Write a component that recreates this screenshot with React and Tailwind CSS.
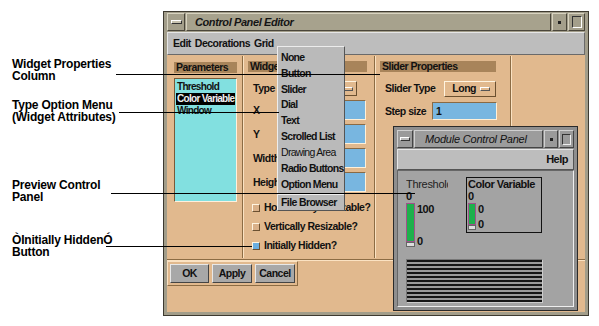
import React from "react";

const UI = "font-['Liberation_Sans',Arial,sans-serif] font-bold text-[10.5px] tracking-[-0.5px] leading-none text-[#111] whitespace-nowrap";
const ANN = "font-['Liberation_Sans',Arial,sans-serif] font-bold text-[12px] leading-[12px] tracking-[-0.2px] text-black whitespace-nowrap";

function Field({ label, w = "w-[66px]" }) {
  return (
    <div className="flex items-center h-[20px]">
      <span className={`${UI} pl-[9px]`}>{label}</span>
      <div className={`ml-auto mr-[8px] h-[20px] ${w} bg-[#78b6e0] border-t border-l border-[#8a6a44] border-b border-r border-b-[#fff0d8] border-r-[#fff0d8]`} />
    </div>
  );
}

function Check({ label, on }) {
  return (
    <div className="flex items-center h-[19px] pl-[8px] gap-[4px]">
      <span className={`shrink-0 w-[8px] h-[8px] border-t border-l border-t-[#fff4e0] border-l-[#fff4e0] border-b border-r border-b-[#6b5030] border-r-[#6b5030] ${on ? "bg-[#6aaee0]" : "bg-[#d9b088]"}`} />
      <span className={`${UI}`}>{label}</span>
    </div>
  );
}

function OptGlyph() {
  return <span className="inline-block shrink-0 w-[10px] h-[4px] border-t border-l border-t-[#fff] border-l-[#fff] border-b border-r border-b-[#555] border-r-[#555]" />;
}

function Sep() {
  return <div className="shrink-0 w-[2px] self-stretch border-l border-l-[#8c6c44] border-r border-r-[#fbe2c2] my-[1px]" />;
}

export default function App() {
  const items = ["None", "Button", "Slider", "Dial", "Text", "Scrolled List", "Drawing Area", "Radio Buttons", "Option Menu"];
  return (
    <div className="relative w-[599px] h-[326px] bg-white overflow-hidden">
      <div className="flex">
        {/* annotation column */}
        <div className="w-[163px] shrink-0 flex flex-col pl-[12px]">
          <div className={`${ANN} mt-[58px]`}>Widget Properties<br />Column</div>
          <div className={`${ANN} mt-[17px]`}>Type Option Menu<br />(Widget Attributes)</div>
          <div className={`${ANN} mt-[56px]`}>Preview Control<br />Panel</div>
          <div className={`${ANN} mt-[31px]`}>ÒInitially HiddenÓ<br />Button</div>
        </div>

        {/* main window */}
        <div className="mt-[11px] w-[426px] h-[305px] shrink-0 bg-[#a29d8a] border border-[#3e3a30] pt-[1px] px-[3px] pb-[3px] flex flex-col">
          {/* title bar */}
          <div className="h-[18px] flex items-stretch gap-[1px]">
            <div className="w-[18px] bg-[#a49f8b] border border-t-[#d8d3c0] border-l-[#d8d3c0] border-b-[#4a463a] border-r-[#4a463a] flex items-center justify-center">
              <span className="w-[11px] h-[4px] border border-t-[#fff] border-l-[#fff] border-b-[#333] border-r-[#333] bg-[#c8c3b0]" />
            </div>
            <div className="flex-1 bg-[#a7a28d] border border-t-[#d8d3c0] border-l-[#d8d3c0] border-b-[#4a463a] border-r-[#4a463a] flex items-center pl-[8px]">
              <span className="font-['Liberation_Sans',Arial,sans-serif] font-bold italic text-[11px] tracking-[-0.4px] text-[#151515] whitespace-nowrap">Control Panel Editor</span>
            </div>
            <div className="w-[15px] bg-[#a49f8b] border border-t-[#d8d3c0] border-l-[#d8d3c0] border-b-[#4a463a] border-r-[#4a463a] flex items-center justify-center">
              <span className="w-[3px] h-[3px] bg-[#222]" />
            </div>
            <div className="w-[17px] bg-[#a49f8b] border border-t-[#d8d3c0] border-l-[#d8d3c0] border-b-[#4a463a] border-r-[#4a463a] flex items-center justify-center">
              <span className="w-[10px] h-[12px] border border-t-[#333] border-l-[#333] border-b-[#fff] border-r-[#fff]" />
            </div>
          </div>
          {/* menu bar */}
          <div className="mt-[1px] h-[23px] bg-[#bdbdbd] border border-t-[#e6e6e6] border-l-[#e6e6e6] border-b-[#6a6a6a] border-r-[#6a6a6a] flex items-center pl-[5px] gap-[4px]">
            <span className={UI}>Edit</span>
            <span className={UI}>Decorations</span>
            <span className={UI}>Grid</span>
          </div>
          {/* content */}
          <div className="flex-1 bg-[#e1b98e] flex flex-col">
            <div className="h-[204px] flex">
              {/* parameters column */}
              <div className="w-[75px] shrink-0 pl-[7px] pt-[7px] flex flex-col">
                <div className="w-[63px] h-[11px] bg-[#a8845a] flex items-center pl-[2px]">
                  <span className={UI}>Parameters</span>
                </div>
                <div className="mt-[5px] w-[63px] h-[124px] bg-[#82e0e0] border-t border-l border-t-[#7a5a38] border-l-[#7a5a38] border-b border-r border-b-[#fff0dc] border-r-[#fff0dc] pl-[1px] pt-[2px] flex flex-col overflow-hidden">
                  <span className={`${UI} text-[10px] tracking-[-0.7px] h-[12px] flex items-center pl-[1px]`}>Threshold</span>
                  <span className={`${UI} text-[10px] tracking-[-0.7px] h-[12px] flex items-center pl-[1px] bg-black text-[#f0f0f0] w-[59px]`}>Color Variable</span>
                  <span className={`${UI} text-[10px] tracking-[-0.7px] h-[12px] flex items-center pl-[1px]`}>Window</span>
                </div>
              </div>
              <Sep />
              {/* widget attributes column */}
              <div className="w-[130px] shrink-0 flex flex-col pt-[6px]">
                <div className="ml-[4px] w-[119px] h-[11px] bg-[#a8845a] flex items-center pl-[2px]">
                  <span className={UI}>Widget Attributes</span>
                </div>
                <div className="mt-[9px] h-[15px] flex items-center">
                  <span className={`${UI} pl-[9px]`}>Type</span>
                  <div className="ml-auto mr-[17px] w-[56px] h-[15px] border border-t-[#fff4e0] border-l-[#fff4e0] border-b-[#6b5030] border-r-[#6b5030] flex items-center justify-end pr-[3px]">
                    <OptGlyph />
                  </div>
                </div>
                <div className="mt-[4px] flex flex-col gap-[4px]">
                  <Field label="X" />
                  <Field label="Y" />
                  <Field label="Width" />
                  <Field label="Height" />
                </div>
                <div className="mt-[6px] flex flex-col">
                  <Check label="Horizontally Resizable?" />
                  <Check label="Vertically Resizable?" />
                  <Check label="Initially Hidden?" on />
                </div>
              </div>
              <Sep />
              {/* slider properties column */}
              <div className="w-[134px] shrink-0 flex flex-col pt-[6px]">
                <div className="ml-[4px] w-[116px] h-[11px] bg-[#a8845a] flex items-center pl-[2px]">
                  <span className={UI}>Slider Properties</span>
                </div>
                <div className="mt-[9px] h-[15px] flex items-center">
                  <span className={`${UI} pl-[9px]`}>Slider Type</span>
                  <div className="ml-[9px] w-[52px] h-[16px] border border-t-[#fff4e0] border-l-[#fff4e0] border-b-[#6b5030] border-r-[#6b5030] flex items-center justify-between pl-[7px] pr-[5px]">
                    <span className={UI}>Long</span>
                    <OptGlyph />
                  </div>
                </div>
                <div className="mt-[6px] h-[18px] flex items-center">
                  <span className={`${UI} pl-[9px]`}>Step size</span>
                  <div className="ml-[6px] w-[65px] h-[18px] bg-[#78b6e0] border-t border-l border-t-[#8a6a44] border-l-[#8a6a44] border-b border-r border-b-[#fff0d8] border-r-[#fff0d8] flex items-center pl-[3px]">
                    <span className={UI}>1</span>
                  </div>
                </div>
              </div>
              <Sep />
              <div className="flex-1" />
            </div>
            {/* horizontal separator */}
            <div className="h-[2px] border-t border-t-[#8c6c44] border-b border-b-[#fbe2c2]" />
            {/* buttons */}
            <div className="flex">
              <div className="flex gap-[3px] p-[2px] border border-t-[#fbe2c2] border-l-[#fbe2c2] border-b-[#8c6c44] border-r-[#8c6c44]">
                {["OK", "Apply", "Cancel"].map((b, i) => (
                  <div key={b} className={`${i === 0 ? "w-[39px]" : "w-[40px]"} h-[19px] bg-[#a8a8a8] border border-t-[#e8e8e8] border-l-[#e8e8e8] border-b-[#444] border-r-[#444] flex items-center justify-center`}>
                    <span className={UI}>{b}</span>
                  </div>
                ))}
              </div>
            </div>
          </div>
        </div>
      </div>

      {/* popup menu */}
      <div className="absolute left-[277px] top-[46px] w-[68px] h-[165px] bg-[#bababa] border border-t-[#ececec] border-l-[#ececec] border-b-[#555] border-r-[#555] flex flex-col pt-[2px] overflow-hidden">
        {items.map((it) => (
          <div key={it} className={`h-[16px] flex items-center pl-[3px] ${UI} tracking-[-0.7px] ${it === "Drawing Area" ? "font-normal text-[#7a7a7a]" : ""}`}>{it}</div>
        ))}
        <div className="mt-[1px] h-[2px] border-t border-t-[#666] border-b border-b-[#eee]" />
        <div className={`h-[15px] flex items-center pl-[3px] ${UI} tracking-[-0.6px]`}>File Browser</div>
      </div>

      {/* module control panel */}
      <div className="absolute left-[393px] top-[126px] w-[185px] h-[185px] bg-[#8e8e8e] border border-[#2a2a2a] p-[3px] flex flex-col">
        <div className="h-[18px] flex items-stretch gap-[1px]">
          <div className="w-[16px] bg-[#9a9a9a] border border-t-[#d0d0d0] border-l-[#d0d0d0] border-b-[#444] border-r-[#444] flex items-center justify-center">
            <span className="w-[10px] h-[4px] border border-t-[#fff] border-l-[#fff] border-b-[#333] border-r-[#333] bg-[#bbb]" />
          </div>
          <div className="flex-1 bg-[#9c9c9c] border border-t-[#d0d0d0] border-l-[#d0d0d0] border-b-[#444] border-r-[#444] flex items-center pl-[10px]">
            <span className="font-['Liberation_Sans',Arial,sans-serif] italic text-[11px] tracking-[-0.2px] text-[#111] whitespace-nowrap">Module Control Panel</span>
          </div>
          <div className="w-[14px] bg-[#9a9a9a] border border-t-[#d0d0d0] border-l-[#d0d0d0] border-b-[#444] border-r-[#444] flex items-center justify-center">
            <span className="w-[3px] h-[3px] bg-[#222]" />
          </div>
          <div className="w-[15px] bg-[#9a9a9a] border border-t-[#d0d0d0] border-l-[#d0d0d0] border-b-[#444] border-r-[#444] flex items-center justify-center">
            <span className="w-[9px] h-[11px] border border-t-[#333] border-l-[#333] border-b-[#eee] border-r-[#eee]" />
          </div>
        </div>
        <div className="mt-[1px] h-[21px] bg-[#bdbdbd] border border-t-[#e6e6e6] border-l-[#e6e6e6] border-b-[#555] border-r-[#555] flex items-center justify-end pr-[5px]">
          <span className={`${UI} text-[11px]`}>Help</span>
        </div>
        <div className="flex-1 bg-[#a3a3a3] border border-t-[#666] border-l-[#666] border-b-[#eee] border-r-[#eee] flex flex-col pl-[8px] pt-[7px]">
          <div className="flex gap-[16px]">
            {/* threshold */}
            <div className="w-[44px] flex flex-col">
              <span className="font-['Liberation_Sans',Arial,sans-serif] text-[11px] leading-[12px] tracking-[-0.3px] text-[#222] whitespace-nowrap overflow-hidden w-[42px]">Threshold</span>
              <span className={`${UI} text-[11px] mt-[1px]`}>0</span>
              <div className="flex mt-[1px]">
                <div className="flex flex-col">
                  <div className="w-[9px] h-[39px] bg-[#1eb04c] border border-[#a0508a]" />
                  <div className="w-[9px] h-[5px] bg-[#ddd] border border-[#666]" />
                </div>
                <div className="flex flex-col justify-between ml-[2px] pt-[1px] h-[44px]">
                  <span className={`${UI} text-[11px]`}>100</span>
                  <span className={`${UI} text-[11px]`}>0</span>
                </div>
              </div>
            </div>
            {/* color variable */}
            <div className="-mt-[1px] w-[76px] h-[56px] border border-[#111] flex flex-col pl-[1px]">
              <span className={`${UI} text-[11px] tracking-[-0.4px] mt-[1px]`}>Color Variable</span>
              <span className={`${UI} text-[11px] mt-[1px]`}>0</span>
              <div className="flex mt-[1px]">
                <div className="flex flex-col">
                  <div className="w-[8px] h-[22px] bg-[#1eb04c] border border-[#a0508a]" />
                  <div className="w-[8px] h-[5px] bg-[#ddd] border border-[#666]" />
                </div>
                <div className="flex flex-col justify-between ml-[2px] pt-[1px] h-[27px]">
                  <span className={`${UI} text-[11px]`}>0</span>
                  <span className={`${UI} text-[11px]`}>0</span>
                </div>
              </div>
            </div>
          </div>
          <div className="mt-[12px] w-[137px] h-[44px] border border-t-[#777] border-l-[#777] border-b-[#ccc] border-r-[#ccc] bg-[repeating-linear-gradient(to_bottom,#151515_0px,#151515_2px,#9a9a9a_2px,#9a9a9a_4px)]" />
        </div>
      </div>

      {/* annotation leader lines */}
      <div className="absolute left-[116px] top-[74px] w-[264px] h-[1px] bg-black" />
      <div className="absolute left-[119px] top-[112px] w-[160px] h-[1px] bg-black" />
      <div className="absolute left-[111px] top-[193px] w-[304px] h-[1px] bg-black" />
      <div className="absolute left-[106px] top-[246px] w-[146px] h-[1px] bg-black" />
    </div>
  );
}
